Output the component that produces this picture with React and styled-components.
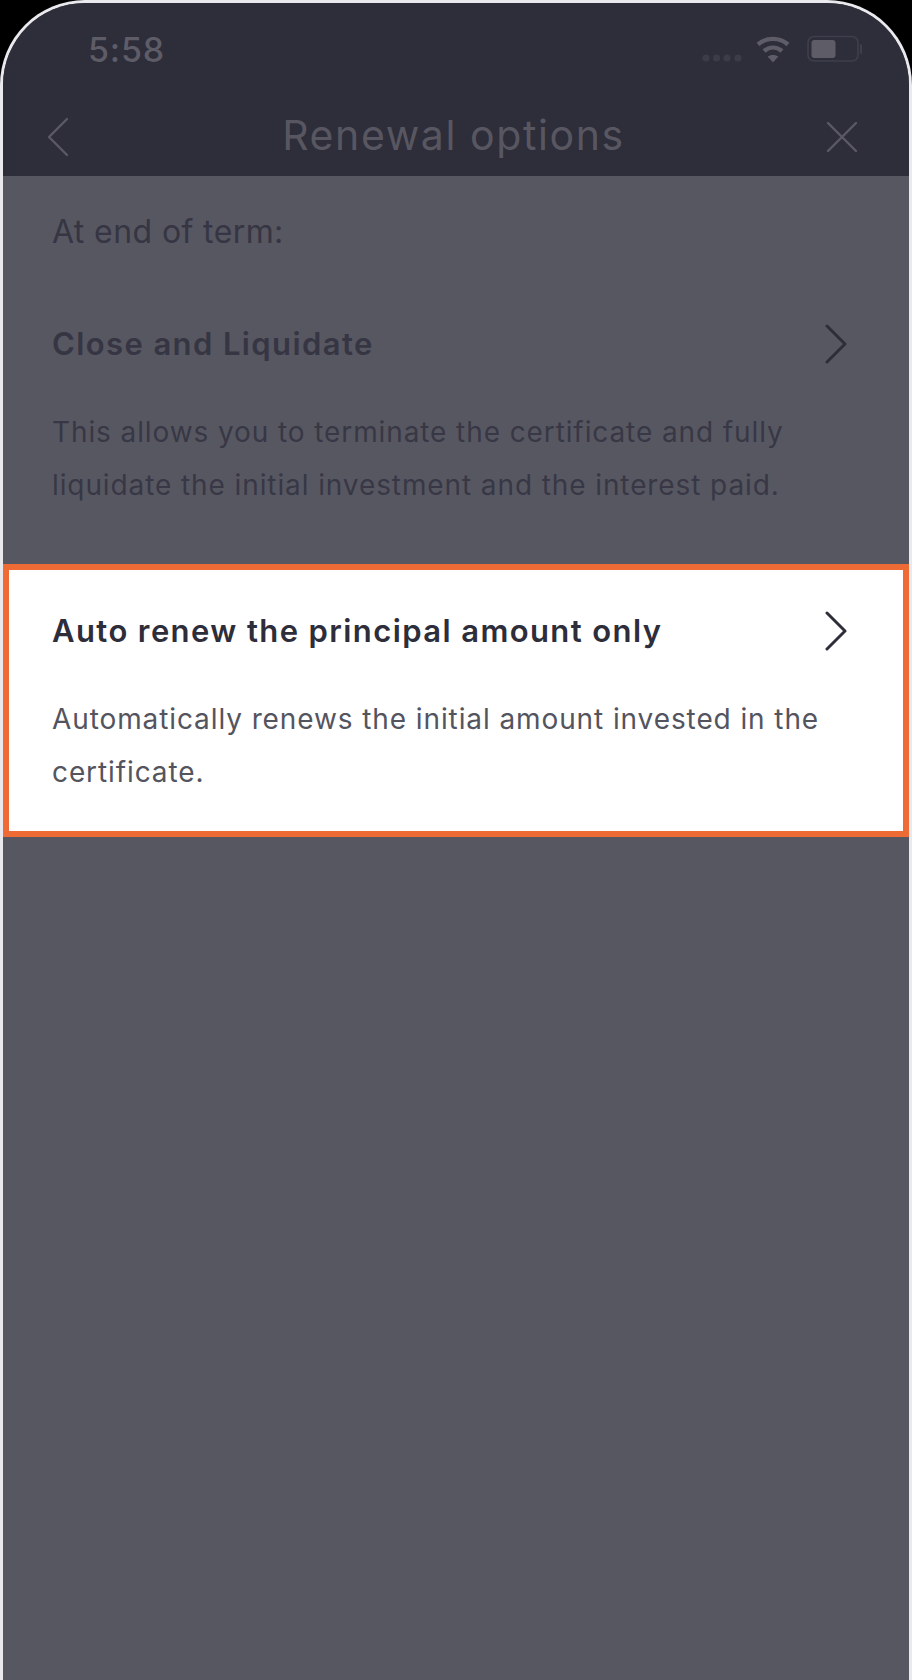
import React from 'react';
import styled, { createGlobalStyle } from 'styled-components';

const GlobalStyle = createGlobalStyle`
  html, body {
    margin: 0;
    padding: 0;
    background: #000;
  }
  * {
    box-sizing: border-box;
  }
`;

const Phone = styled.div`
  width: 912px;
  height: 1680px;
  border: 3px solid #e9e9ee;
  border-bottom: 0;
  border-radius: 85px 85px 0 0;
  background: #575761;
  overflow: hidden;
  display: flex;
  flex-direction: column;
  font-family: "Inter", "Liberation Sans", sans-serif;
`;

const Header = styled.header`
  height: 173px;
  flex-shrink: 0;
  background: #2e2d3a;
  display: flex;
  flex-direction: column;
`;

const StatusBar = styled.div`
  height: 77px;
  padding: 25px 46px 0 85px;
  display: flex;
  align-items: flex-start;
  justify-content: space-between;
`;

const Clock = styled.span`
  font-size: 34px;
  font-weight: 500;
  line-height: 44px;
  letter-spacing: 0.8px;
  color: #5d5c67;
`;

const StatusIcons = styled.div`
  display: flex;
  align-items: center;
  gap: 14px;
  padding-top: 7px;
`;

const Dots = styled.svg`
  margin-top: 18px;
`;

const BatteryIcon = styled.svg`
  margin-left: 3px;
`;

const NavBar = styled.div`
  height: 96px;
  padding: 18px 51px 0 44px;
  display: grid;
  grid-template-columns: 1fr auto 1fr;
  align-items: center;
`;

const CloseSlot = styled.div`
  display: flex;
  justify-content: flex-end;
`;

const NavTitle = styled.h1`
  margin: -4px 0 0 2px;
  font-size: 41px;
  font-weight: 400;
  line-height: 60px;
  letter-spacing: 1.6px;
  color: #585761;
`;

const Intro = styled.p`
  margin: 0 0 19px;
  padding: 29px 49px 0;
  font-size: 32px;
  line-height: 53px;
  letter-spacing: 0.4px;
  color: #363543;
`;

const Option = styled.section`
  border: 6px solid ${({ $selected }) => ($selected ? '#ee6b36' : 'transparent')};
  background: ${({ $selected }) => ($selected ? '#fff' : 'transparent')};
  margin-bottom: 14px;
  padding: 39px 56px 32px 43px;
`;

const OptionHead = styled.div`
  height: 44px;
  display: flex;
  align-items: center;
  justify-content: space-between;
`;

const OptionTitle = styled.h2`
  margin: 0;
  font-size: 31px;
  font-weight: 600;
  line-height: 44px;
  letter-spacing: 1.4px;
  color: ${({ $selected }) => ($selected ? '#2e2d3a' : '#363543')};
`;

const OptionText = styled.p`
  margin: 40px 0 0;
  font-size: 28px;
  line-height: 53px;
  letter-spacing: 0.9px;
  color: ${({ $selected }) => ($selected ? '#54545f' : '#383745')};
`;

const Line = ({ d, width, height, color, weight = 2.4 }) => (
  <svg width={width} height={height} viewBox={`0 0 ${width} ${height}`} fill="none">
    <path d={d} stroke={color} strokeWidth={weight} strokeLinecap="round" strokeLinejoin="round" />
  </svg>
);

const SignalDots = () => (
  <Dots width="40" height="8" viewBox="0 0 40 8" fill="#3c3b48">
    <circle cx="4" cy="4" r="3.6" />
    <circle cx="14.5" cy="4" r="3.6" />
    <circle cx="25" cy="4" r="3.6" />
    <circle cx="36" cy="4" r="3.6" />
  </Dots>
);

const Wifi = () => (
  <svg width="34" height="27" viewBox="0 0 34 27" fill="none" stroke="#5d5c67" strokeWidth="4.4">
    <path d="M2 8.5C10.5 1 23.5 1 32 8.5" />
    <path d="M8 15C13.5 10.5 20.5 10.5 26 15" />
    <path d="M17 26.5L11.6 20.6C14.5 18.3 19.5 18.3 22.4 20.6Z" fill="#5d5c67" stroke="none" />
  </svg>
);

const Battery = () => (
  <BatteryIcon width="56" height="28" viewBox="0 0 56 28" fill="none">
    <rect x="1" y="1.5" width="50" height="24.5" rx="6" stroke="#3f3e4b" strokeWidth="1.6" />
    <rect x="4.5" y="5" width="24" height="18" rx="3" fill="#5d5c67" />
    <path d="M54 10V18" stroke="#3f3e4b" strokeWidth="2" strokeLinecap="round" />
  </BatteryIcon>
);

const RenewalOption = ({ title, text, selected }) => (
  <Option $selected={selected}>
    <OptionHead>
      <OptionTitle $selected={selected}>{title}</OptionTitle>
      <Line d="M2 2L20 20L2 38" width={22} height={40} color="#2e2d3a" weight={3} />
    </OptionHead>
    <OptionText $selected={selected}>{text}</OptionText>
  </Option>
);

export default function App() {
  return (
    <Phone>
      <GlobalStyle />
      <Header>
        <StatusBar>
          <Clock>5:58</Clock>
          <StatusIcons>
            <SignalDots />
            <Wifi />
            <Battery />
          </StatusIcons>
        </StatusBar>
        <NavBar>
          <Line d="M20 2L2 20L20 38" width={22} height={40} color="#5a5964" />
          <NavTitle>Renewal options</NavTitle>
          <CloseSlot>
            <Line d="M2 2L30 30M30 2L2 30" width={32} height={32} color="#5a5964" />
          </CloseSlot>
        </NavBar>
      </Header>
      <Intro>At end of term:</Intro>
      <RenewalOption
        title="Close and Liquidate"
        text="This allows you to terminate the certificate and fully liquidate the initial investment and the interest paid."
      />
      <RenewalOption
        selected
        title="Auto renew the principal amount only"
        text="Automatically renews the initial amount invested in the certificate."
      />
    </Phone>
  );
}
